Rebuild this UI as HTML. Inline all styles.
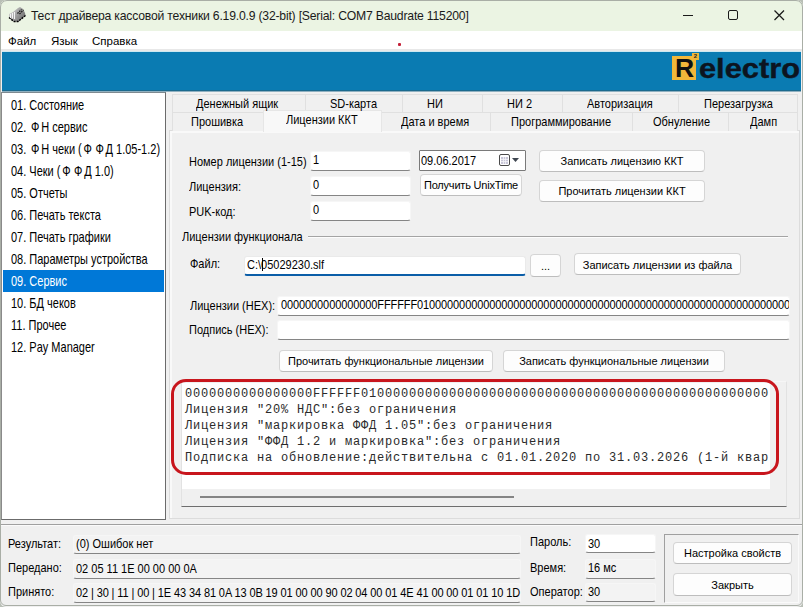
<!DOCTYPE html>
<html><head><meta charset="utf-8">
<style>
*{box-sizing:border-box;margin:0;padding:0}
html,body{width:803px;height:607px;overflow:hidden;background:#b9bfb6}
body{font-family:"Liberation Sans",sans-serif;font-size:11px;color:#000;position:relative}
.a{position:absolute;white-space:nowrap}
.t{position:absolute;white-space:nowrap;line-height:13px;transform:scaleY(1.14);transform-origin:0 10px}
#win{position:absolute;left:0;top:0;width:803px;height:607px;background:#f0f0f0;border-radius:7px 7px 6px 6px;overflow:hidden}
#frame{position:absolute;left:0;top:0;width:803px;height:606px;border:1px solid #a9aea6;border-radius:7px 7px 6px 6px;pointer-events:none}
#title{position:absolute;left:0;top:0;width:803px;height:31px;background:#ebf4e3}
#menu{position:absolute;left:0;top:31px;width:803px;height:18px;background:#fff}
#banner{position:absolute;left:2px;top:51px;width:799px;height:40px;background:#0a7bb2;border-top:1px solid #cde8f1;border-bottom:1px solid #1b6a8e}
#list{position:absolute;left:1px;top:92px;width:165px;height:428px;background:#fff;border-left:1px solid #8a8a8a;border-top:1px solid #7f8a90;border-right:1px solid #6b6b6b;border-bottom:1px solid #6b6b6b}
.sel{position:absolute;left:3px;top:270px;width:161px;height:22px;background:#0078d7}
.tab{position:absolute;background:#f0f0f0;border:1px solid #e0e0e0;border-bottom:none;text-align:center;line-height:13px}
.edit{position:absolute;background:#fff;border:1px solid #f6f6f6;border-bottom:1px solid #858585;border-radius:3px}
.btn{position:absolute;background:#fdfdfd;border:1px solid #d5d5d5;border-bottom-color:#bdbdbd;border-radius:4px;text-align:center;line-height:13px}
.ro{position:absolute;background:#f3f3f3;border:1px solid #f6f6f6;border-bottom:1px solid #858585;border-radius:3px}
.m{position:absolute;white-space:pre;font-family:"Liberation Mono",monospace;font-size:12px;letter-spacing:0.8px;line-height:16px;color:#2a2a2a}
</style></head><body>
<div id="win">
  <div id="title">
    <svg class="a" style="left:4px;top:4px" width="24" height="22" viewBox="0 0 24 22">
      <defs><linearGradient id="ig" x1="0" y1="0" x2="1" y2="0.6"><stop offset="0" stop-color="#e8e8e8"/><stop offset="0.5" stop-color="#a8a8a8"/><stop offset="1" stop-color="#707070"/></linearGradient></defs>
      <path d="M5 10 L9 8 L14 4 L16 3 L19 5 L21 9 L21.5 11.5 L15 17.5 L10 17.5 L5 14.5 Z" fill="url(#ig)"/>
      <path d="M5 13.5 L10 17.5 L14 17.5 L21.5 11.5" stroke="#000" stroke-width="1.4" fill="none" stroke-dasharray="2 1"/>
      <path d="M13.5 9.5 L17.5 5.5 M15.5 10 L19.5 6" stroke="#111" stroke-width="1.2" fill="none" stroke-dasharray="1.5 1"/>
      <path d="M6.5 10 V14 M8.5 9 V14.5 M10.5 8 V15" stroke="#f4f4f4" stroke-width="1" fill="none"/>
    </svg>
    <div class="t" style="left:31px;top:10px;font-size:12.2px;letter-spacing:-0.2px;transform:none;color:#1a1a1a">Тест драйвера кассовой техники 6.19.0.9 (32-bit) [Serial: COM7 Baudrate 115200]</div>
    <div class="a" style="left:683px;top:15px;width:10px;height:1px;background:#1a1a1a"></div>
    <div class="a" style="left:728px;top:10px;width:10px;height:10px;border:1.2px solid #1a1a1a;border-radius:2px"></div>
    <svg class="a" style="left:774px;top:10px" width="11" height="11" viewBox="0 0 11 11"><path d="M0.5 0.5 L10 10 M10 0.5 L0.5 10" stroke="#1a1a1a" stroke-width="1.25"/></svg>
  </div>
  <div id="menu">
    <div class="t" style="left:8px;top:4px;font-size:11.5px;transform:none">Файл</div>
    <div class="t" style="left:51px;top:4px;font-size:11.5px;transform:none">Язык</div>
    <div class="t" style="left:92px;top:4px;font-size:11.5px;transform:none">Справка</div>
    <div class="a" style="left:398px;top:12px;width:3px;height:3px;background:#c42038;border-radius:1px"></div>
  </div>
  <div class="a" style="left:0;top:49px;width:803px;height:2px;background:#e8e8e8"></div>
  <div id="banner">
    <div class="a" style="left:670px;top:4px;width:24px;height:24px;background:#f2b73a"></div>
    <div class="a" style="left:690px;top:1px;width:7px;height:7px;background:#f2b73a;font-size:6px;line-height:7px;text-align:center;font-weight:bold;color:#222">2</div>
    <div class="a" style="left:673px;top:2px;font-size:26px;font-weight:bold;line-height:28px;color:#111;transform:scaleX(1.02);transform-origin:0 0">R</div>
    <div class="a" style="left:697px;top:2px;font-size:27px;font-weight:bold;line-height:30px;color:#0c1420;transform:scaleX(1.14);transform-origin:0 0;-webkit-text-stroke:0.4px #0c1420">electro</div>
  </div>
  <div id="list"></div>
  <div class="a" style="left:2px;top:91px;width:799px;height:1px;background:#8fb0c0"></div>
  <div class="sel"></div>
  <div class="t" style="left:11px;top:100px;transform:scaleY(1.25)">01. Состояние</div>
  <div class="t" style="left:11px;top:122px;transform:scaleY(1.25)">02. <span style="margin:0 1.75px">Ф</span>Н сервис</div>
  <div class="t" style="left:11px;top:144px;transform:scaleY(1.25)">03. <span style="margin:0 1.75px">Ф</span>Н чеки (<span style="margin:0 1.75px">Ф</span><span style="margin:0 1.75px">Ф</span>Д 1.05-1.2)</div>
  <div class="t" style="left:11px;top:166px;transform:scaleY(1.25)">04. Чеки (<span style="margin:0 1.75px">Ф</span><span style="margin:0 1.75px">Ф</span>Д 1.0)</div>
  <div class="t" style="left:11px;top:188px;transform:scaleY(1.25)">05. Отчеты</div>
  <div class="t" style="left:11px;top:210px;transform:scaleY(1.25)">06. Печать текста</div>
  <div class="t" style="left:11px;top:232px;transform:scaleY(1.25)">07. Печать графики</div>
  <div class="t" style="left:11px;top:254px;transform:scaleY(1.25)">08. Параметры устройства</div>
  <div class="t" style="left:11px;top:276px;transform:scaleY(1.25);color:#fff">09. Сервис</div>
  <div class="t" style="left:11px;top:298px;transform:scaleY(1.25)">10. БД чеков</div>
  <div class="t" style="left:11px;top:320px;transform:scaleY(1.25)">11. Прочее</div>
  <div class="t" style="left:11px;top:342px;transform:scaleY(1.25)">12. Pay Manager</div>

  <!-- tab panel -->
  <div class="a" style="left:169px;top:130px;width:631px;height:389px;border:1px solid #dcdcdc;background:#f0f0f0"></div>
  <div class="a" style="left:170px;top:131px;width:629px;height:387px;border-left:2px solid #f9f9f9;border-top:2px solid #f9f9f9"></div>
  <div class="tab" style="left:172px;top:94px;width:134px;height:18px"></div>
  <div class="tab" style="left:305px;top:94px;width:98px;height:18px"></div>
  <div class="tab" style="left:402px;top:94px;width:81px;height:18px"></div>
  <div class="tab" style="left:482px;top:94px;width:81px;height:18px"></div>
  <div class="tab" style="left:562px;top:94px;width:117px;height:18px"></div>
  <div class="tab" style="left:678px;top:94px;width:120px;height:18px"></div>
  <div class="tab" style="left:172px;top:112px;width:92px;height:19px"></div>
  <div class="tab" style="left:381px;top:112px;width:110px;height:19px"></div>
  <div class="tab" style="left:490px;top:112px;width:143px;height:19px"></div>
  <div class="tab" style="left:632px;top:112px;width:97px;height:19px"></div>
  <div class="tab" style="left:728px;top:112px;width:70px;height:19px"></div>
  <div class="tab" style="left:263px;top:110px;width:119px;height:22px;background:#f8f8f8;border-color:#e6e6e6"></div>
  <div class="t" style="left:196px;top:98px">Денежный ящик</div>
  <div class="t" style="left:330px;top:98px">SD-карта</div>
  <div class="t" style="left:427px;top:98px">НИ</div>
  <div class="t" style="left:507px;top:98px">НИ 2</div>
  <div class="t" style="left:587px;top:98px">Авторизация</div>
  <div class="t" style="left:704px;top:98px">Перезагрузка</div>
  <div class="t" style="left:191px;top:116px">Прошивка</div>
  <div class="t" style="left:286px;top:114px">Лицензии ККТ</div>
  <div class="t" style="left:401px;top:116px">Дата и время</div>
  <div class="t" style="left:511px;top:116px">Программирование</div>
  <div class="t" style="left:653px;top:116px">Обнуление</div>
  <div class="t" style="left:750px;top:116px">Дамп</div>

  <!-- form -->
  <div class="t" style="left:189px;top:156px">Номер лицензии (1-15)</div>
  <div class="t" style="left:189px;top:181px">Лицензия:</div>
  <div class="t" style="left:189px;top:206px">PUK-код:</div>
  <div class="edit" style="left:310px;top:151px;width:101px;height:20px"></div>
  <div class="edit" style="left:310px;top:176px;width:101px;height:20px"></div>
  <div class="edit" style="left:310px;top:201px;width:101px;height:20px"></div>
  <div class="t" style="left:313px;top:154px">1</div>
  <div class="t" style="left:313px;top:179px">0</div>
  <div class="t" style="left:313px;top:204px">0</div>
  <div class="a" style="left:419px;top:150px;width:107px;height:21px;background:#fff;border:1px solid #7a7a7a;border-radius:1px"></div>
  <div class="t" style="left:421px;top:155px">09.06.2017</div>
  <svg class="a" style="left:498px;top:153px" width="24" height="14" viewBox="0 0 24 14">
    <rect x="1.5" y="1.5" width="10" height="11" rx="1.5" fill="#fff" stroke="#4a4a4a"/>
    <rect x="3" y="4" width="7" height="7" fill="#c8c6d8"/>
    <path d="M3 6.5 H10 M3 8.5 H10 M5.5 4 V11 M7.5 4 V11" stroke="#f4f4f8" stroke-width="0.8"/>
    <path d="M14 5 L21 5 L17.5 9 Z" fill="#3e4650"/>
  </svg>
  <div class="btn" style="left:420px;top:174px;width:102px;height:22px;padding-top:4px;letter-spacing:-0.2px">Получить UnixTime</div>
  <div class="btn" style="left:539px;top:150px;width:166px;height:22px;padding-top:4px">Записать лицензию ККТ</div>
  <div class="btn" style="left:539px;top:180px;width:166px;height:22px;padding-top:4px">Прочитать лицензии ККТ</div>

  <div class="t" style="left:182px;top:231px">Лицензии функционала</div>
  <div class="a" style="left:308px;top:236px;width:480px;height:1px;background:#a4a4a4"></div>
  <div class="a" style="left:308px;top:237px;width:480px;height:1px;background:#fdfdfd"></div>
  <div class="t" style="left:190px;top:258px">Файл:</div>
  <div class="a" style="left:244px;top:256px;width:282px;height:20px;background:#fff;border:1px solid #eaeaea;border-bottom:2px solid #0b5ea8;border-radius:3px"></div>
  <div class="a" style="left:262px;top:258px;width:1px;height:13px;background:#000"></div>
  <div class="t" style="left:247px;top:259px">C:\05029230.slf</div>
  <div class="btn" style="left:530px;top:254px;width:31px;height:23px;padding-top:5px">...</div>
  <div class="btn" style="left:574px;top:253px;width:167px;height:22px;padding-top:5px">Записать лицензии из файла</div>

  <div class="t" style="left:190px;top:300px">Лицензии (HEX):</div>
  <div class="t" style="left:189px;top:324px">Подпись (HEX):</div>
  <div class="edit" style="left:277px;top:296px;width:513px;height:20px;overflow:hidden"><div class="t" style="left:3px;top:2px;letter-spacing:-0.1px">0000000000000000FFFFFF01000000000000000000000000000000000000000000000000000000000000000000000000</div></div>
  <div class="edit" style="left:277px;top:320px;width:513px;height:20px"></div>
  <div class="btn" style="left:279px;top:350px;width:214px;height:22px;padding-top:4px">Прочитать функциональные лицензии</div>
  <div class="btn" style="left:503px;top:350px;width:222px;height:22px;padding-top:4px">Записать функциональные лицензии</div>

  <!-- memo -->
  <div class="a" style="left:181px;top:381px;width:606px;height:126px;background:#f0f0f0;border-bottom:1px solid #6e6e6e;border-left:1px solid #e2e2e2;border-right:1px solid #e2e2e2;border-top:1px solid #f6f6f6"></div>
  <div class="a" style="left:182px;top:383px;width:588px;height:106px;background:#fff;overflow:hidden">
  <div class="m" style="left:3px;top:3px">0000000000000000FFFFFF010000000000000000000000000000000000000000000000000</div>
<div class="m" style="left:3px;top:19px">Лицензия "20% НДС":без ограничения</div>
<div class="m" style="left:3px;top:35px">Лицензия "маркировка ФФД 1.05":без ограничения</div>
<div class="m" style="left:3px;top:51px">Лицензия "ФФД 1.2 и маркировка":без ограничения</div>
<div class="m" style="left:3px;top:67px">Подписка на обновление:действительна с 01.01.2020 по 31.03.2026 (1-й квар</div>
</div>
  <div class="a" style="left:200px;top:496px;width:314px;height:2px;background:#858585"></div>
  <div class="a" style="left:171px;top:379px;width:608px;height:96px;border:3px solid #c8161d;border-radius:15px"></div>

  <!-- status -->
  <div class="a" style="left:1px;top:524px;width:801px;height:1px;background:#a0a0a0"></div>
  <div class="a" style="left:1px;top:525px;width:801px;height:1px;background:#fbfbfb"></div>
  <div class="t" style="left:8px;top:538px">Результат:</div>
  <div class="t" style="left:8px;top:562px">Передано:</div>
  <div class="t" style="left:8px;top:586px">Принято:</div>
  <div class="ro" style="left:73px;top:535px;width:448px;height:19px"></div>
  <div class="ro" style="left:73px;top:559px;width:448px;height:20px"></div>
  <div class="ro" style="left:73px;top:583px;width:448px;height:20px"></div>
  <div class="t" style="left:76px;top:538px">(0) Ошибок нет</div>
  <div class="t" style="left:76px;top:563px">02 05 11 1E 00 00 00 0A</div>
  <div class="t" style="left:76px;top:587px;letter-spacing:-0.11px">02 | 30 | 11 | 00 | 1E 43 34 81 0A 13 0B 19 01 00 00 90 02 04 00 01 4E 41 00 00 01 01 10 1D</div>
  <div class="t" style="left:530px;top:536px">Пароль:</div>
  <div class="t" style="left:530px;top:562px">Время:</div>
  <div class="t" style="left:530px;top:586px">Оператор:</div>
  <div class="edit" style="left:585px;top:534px;width:71px;height:19px"></div>
  <div class="ro" style="left:585px;top:559px;width:71px;height:20px"></div>
  <div class="ro" style="left:585px;top:583px;width:71px;height:19px"></div>
  <div class="t" style="left:588px;top:538px">30</div>
  <div class="t" style="left:588px;top:562px">16 мс</div>
  <div class="t" style="left:588px;top:586px">30</div>
  <div class="a" style="left:664px;top:534px;width:135px;height:69px;border-left:1px solid #a0a0a0;border-top:1px solid #a0a0a0;border-right:1px solid #fafafa;border-bottom:1px solid #fafafa"></div>
  <div class="btn" style="left:673px;top:542px;width:119px;height:22px;padding-top:4px">Настройка свойств</div>
  <div class="btn" style="left:673px;top:573px;width:119px;height:23px;padding-top:5px">Закрыть</div>
</div>
<div id="frame"></div>
</body></html>
